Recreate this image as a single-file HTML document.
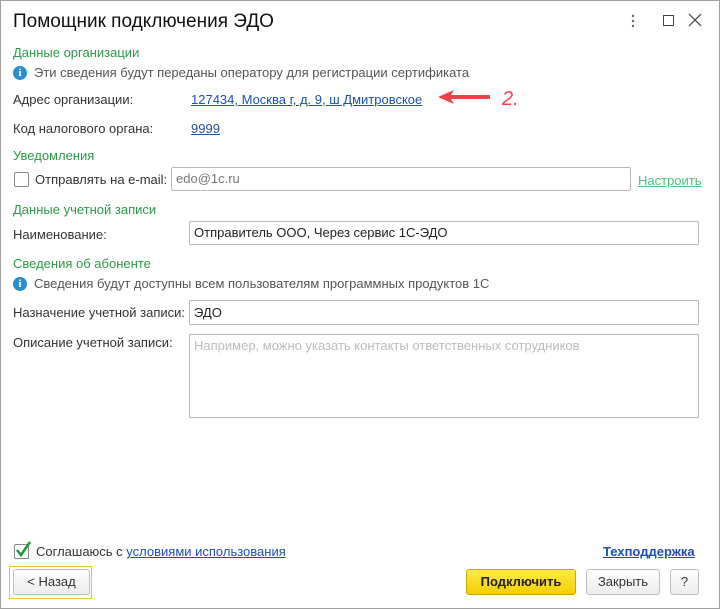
<!DOCTYPE html>
<html><head><meta charset="utf-8"><style>
body{margin:0;width:720px;height:609px;background:#fff;font-family:"Liberation Sans",Arial,sans-serif;font-size:13px;color:#333;position:relative;overflow:hidden}
.a{position:absolute;white-space:nowrap}
.frame{position:absolute;left:0;top:0;width:718px;height:607px;border:1px solid #a0a0a0}
.g{color:#2b9a48}
.lnk{color:#1c4fb0;text-decoration:underline}
.inp{position:absolute;border:1px solid #b8b8b8;border-radius:2px;background:#fff;box-sizing:border-box;padding:0 4px}
.info{position:absolute;width:14px;height:14px;border-radius:50%;background:#2a8fd0;color:#fff;font-size:11px;font-weight:bold;text-align:center;line-height:14px;font-family:"Liberation Serif",serif}
.btn{position:absolute;box-sizing:border-box;border:1px solid #c0c0c0;border-radius:3px;background:linear-gradient(#fff,#ececec);text-align:center;color:#333}
</style></head><body>
<div class="frame"></div>
<div class="a" style="left:13px;top:11px;font-size:19px;color:#111">Помощник подключения ЭДО</div>
<svg class="a" style="left:630px;top:13px" width="6" height="16"><circle cx="3" cy="3" r="1.2" fill="#666"/><circle cx="3" cy="8" r="1.2" fill="#666"/><circle cx="3" cy="13" r="1.2" fill="#666"/></svg>
<div class="a" style="left:663px;top:15px;width:9px;height:9px;border:1.5px solid #444"></div>
<svg class="a" style="left:688px;top:13px" width="14" height="14"><path d="M1 1 L13 13 M13 1 L1 13" stroke="#555" stroke-width="1.3"/></svg>

<div class="a g" style="left:13px;top:45px">Данные организации</div>
<div class="info" style="left:13px;top:66px">i</div>
<div class="a" style="left:34px;top:65px;color:#555">Эти сведения будут переданы оператору для регистрации сертификата</div>
<div class="a" style="left:13px;top:92px">Адрес организации:</div>
<div class="a lnk" style="left:191px;top:92px">127434, Москва г, д. 9, ш Дмитровское</div>
<svg class="a" style="left:436px;top:89px" width="56" height="16"><path d="M2 8 L18 1 L15 6 L54 6 L54 10 L15 10 L18 15 Z" fill="#f0404a"/></svg>
<div class="a" style="left:502px;top:88px;font-size:20px;color:#f0404a;font-style:italic">2.</div>
<div class="a" style="left:13px;top:121px">Код налогового органа:</div>
<div class="a lnk" style="left:191px;top:121px">9999</div>

<div class="a g" style="left:13px;top:148px">Уведомления</div>
<div class="a" style="left:14px;top:172px;width:13px;height:13px;border:1px solid #888;border-radius:2px"></div>
<div class="a" style="left:35px;top:172px">Отправлять на e-mail:</div>
<div class="inp" style="left:171px;top:167px;width:460px;height:24px;line-height:22px;color:#777">edo@1c.ru</div>
<div class="a" style="left:638px;top:173px;color:#49c47a;text-decoration:underline">Настроить</div>

<div class="a g" style="left:13px;top:202px">Данные учетной записи</div>
<div class="a" style="left:13px;top:227px">Наименование:</div>
<div class="inp" style="left:189px;top:221px;width:510px;height:24px;line-height:22px;color:#222">Отправитель ООО, Через сервис 1С-ЭДО</div>
<div class="a g" style="left:13px;top:256px">Сведения об абоненте</div>
<div class="info" style="left:13px;top:277px">i</div>
<div class="a" style="left:34px;top:276px;color:#555">Сведения будут доступны всем пользователям программных продуктов 1С</div>
<div class="a" style="left:13px;top:305px">Назначение учетной записи:</div>
<div class="inp" style="left:189px;top:300px;width:510px;height:25px;line-height:23px;color:#222">ЭДО</div>
<div class="a" style="left:13px;top:335px">Описание учетной записи:</div>
<div class="inp" style="left:189px;top:334px;width:510px;height:84px;line-height:22px;color:#bbb">Например, можно указать контакты ответственных сотрудников</div>

<div class="a" style="left:14px;top:544px;width:13px;height:13px;border:1px solid #888;border-radius:2px"></div>
<svg class="a" style="left:14px;top:540px" width="18" height="18"><path d="M3 10 L7 15 L16 2" stroke="#1a9a3a" stroke-width="2.5" fill="none"/></svg>
<div class="a" style="left:36px;top:544px">Соглашаюсь с <span class="lnk">условиями использования</span></div>
<div class="a lnk" style="left:603px;top:544px;font-weight:bold">Техподдержка</div>

<div class="a" style="left:9px;top:566px;width:83px;height:33px;border:1px solid #f0c419;box-sizing:border-box"></div>
<div class="btn" style="left:13px;top:569px;width:77px;height:26px;line-height:24px">&lt; Назад</div>
<div class="btn" style="left:466px;top:569px;width:110px;height:26px;line-height:24px;background:linear-gradient(#ffe94a,#f3cf00);border-color:#c9a800;font-weight:bold;color:#222">Подключить</div>
<div class="btn" style="left:586px;top:569px;width:74px;height:26px;line-height:24px">Закрыть</div>
<div class="btn" style="left:670px;top:569px;width:29px;height:26px;line-height:24px">?</div>
</body></html>
